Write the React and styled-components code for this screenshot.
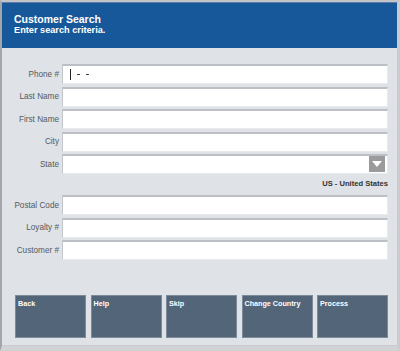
import React from "react";
import styled, { createGlobalStyle } from "styled-components";

const Global = createGlobalStyle`
  html, body { margin: 0; padding: 0; background: #d3d5d8; }
  body { font-family: "Liberation Sans", Arial, sans-serif; }
`;

const Frame = styled.div`
  width: 400px;
  height: 351px;
  box-sizing: border-box;
  border-top: 2px solid #c3c5c8;
  border-left: 2px solid #a4a7aa;
  border-right: 3px solid #c9cbce;
  border-bottom: 5px solid #d0d2d5;
  background: #dfe2e6;
  display: flex;
  flex-direction: column;
  overflow: hidden;
`;

const Header = styled.div`
  height: 46px;
  background: #17589a;
  border-top: 1px solid #5c7ea6;
  box-sizing: border-box;
  padding: 10px 0 0 12px;
  color: #fff;
  font-weight: bold;
`;

const Title = styled.div`
  font-size: 10.5px;
  line-height: 12px;
`;

const Subtitle = styled.div`
  font-size: 9.2px;
  line-height: 11px;
`;

const Body = styled.div`
  flex: 1;
  display: flex;
  flex-direction: column;
  padding: 16px 9px 0 0;
  border-bottom: 1px solid #c8cbcf;
`;

const Form = styled.div`
  display: flex;
  flex-direction: column;
`;

const Row = styled.div`
  display: flex;
  align-items: center;
  height: 20px;
  margin-bottom: ${(p) => p.$gap ?? 2.5}px;
`;

const Label = styled.div`
  width: 57px;
  padding-right: 3px;
  text-align: right;
  font-size: 8.2px;
  color: #555a60;
`;

const Field = styled.div`
  flex: 1;
  height: 20px;
  box-sizing: border-box;
  background: #fff;
  border-top: 2px solid #bcc0c5;
  border-left: 1px solid #c3c7cb;
  border-right: 1px solid #e8eaec;
  border-bottom: 1px solid #e8eaec;
  display: flex;
  align-items: center;
  justify-content: space-between;
  padding: 0 2px 0 7px;
  position: relative;
`;

const Cursor = styled.span`
  display: inline-block;
  width: 1px;
  height: 11px;
  background: #222;
`;

const Dash = styled.span`
  display: inline-block;
  width: 3px;
  height: 1px;
  background: #444;
  margin-left: ${(p) => p.$ml}px;
`;

const PhoneMask = styled.div`
  display: flex;
  align-items: center;
`;

const DropButton = styled.div`
  width: 16px;
  height: 16px;
  background: #9b9b9b;
  display: flex;
  align-items: center;
  justify-content: center;
  margin-top: -1px;
`;

const Country = styled.div`
  text-align: right;
  font-size: 7.6px;
  font-weight: bold;
  color: #333;
  height: 18px;
  line-height: 14px;
  padding-top: 0;
  margin-bottom: 0;
`;

const Spacer = styled.div`
  flex: 1;
`;

const Buttons = styled.div`
  display: flex;
  gap: 4.5px;
  padding: 0 0 7px 13px;
`;

const Button = styled.button`
  width: 71px;
  height: 43px;
  box-sizing: border-box;
  background: #536579;
  border: 1px solid #7d8b99;
  color: #fff;
  font-family: "Liberation Sans", Arial, sans-serif;
  font-weight: bold;
  font-size: 7.2px;
  text-align: left;
  padding: 3px 2px 0 2px;
  display: flex;
  align-items: flex-start;
  cursor: pointer;
`;

const fields = ["Phone #", "Last Name", "First Name", "City"];
const lower = ["Postal Code", "Loyalty #", "Customer #"];
const buttons = ["Back", "Help", "Skip", "Change Country", "Process"];

export default function App() {
  return (
    <>
      <Global />
      <Frame>
        <Header>
          <Title>Customer Search</Title>
          <Subtitle>Enter search criteria.</Subtitle>
        </Header>
        <Body>
          <Form>
            {fields.map((f, i) => (
              <Row key={f}>
                <Label>{f}</Label>
                <Field>
                  {i === 0 && (
                    <PhoneMask>
                      <Cursor />
                      <Dash $ml={6} />
                      <Dash $ml={6} />
                    </PhoneMask>
                  )}
                </Field>
              </Row>
            ))}
            <Row $gap={3}>
              <Label>State</Label>
              <Field>
                <span />
                <DropButton>
                  <svg width="10" height="6" viewBox="0 0 10 6">
                    <polygon points="0,0 10,0 5,6" fill="#fff" />
                  </svg>
                </DropButton>
              </Field>
            </Row>
            <Country>US - United States</Country>
            {lower.map((f) => (
              <Row key={f}>
                <Label>{f}</Label>
                <Field />
              </Row>
            ))}
          </Form>
          <Spacer />
          <Buttons>
            {buttons.map((b) => (
              <Button key={b}>{b}</Button>
            ))}
          </Buttons>
        </Body>
      </Frame>
    </>
  );
}
